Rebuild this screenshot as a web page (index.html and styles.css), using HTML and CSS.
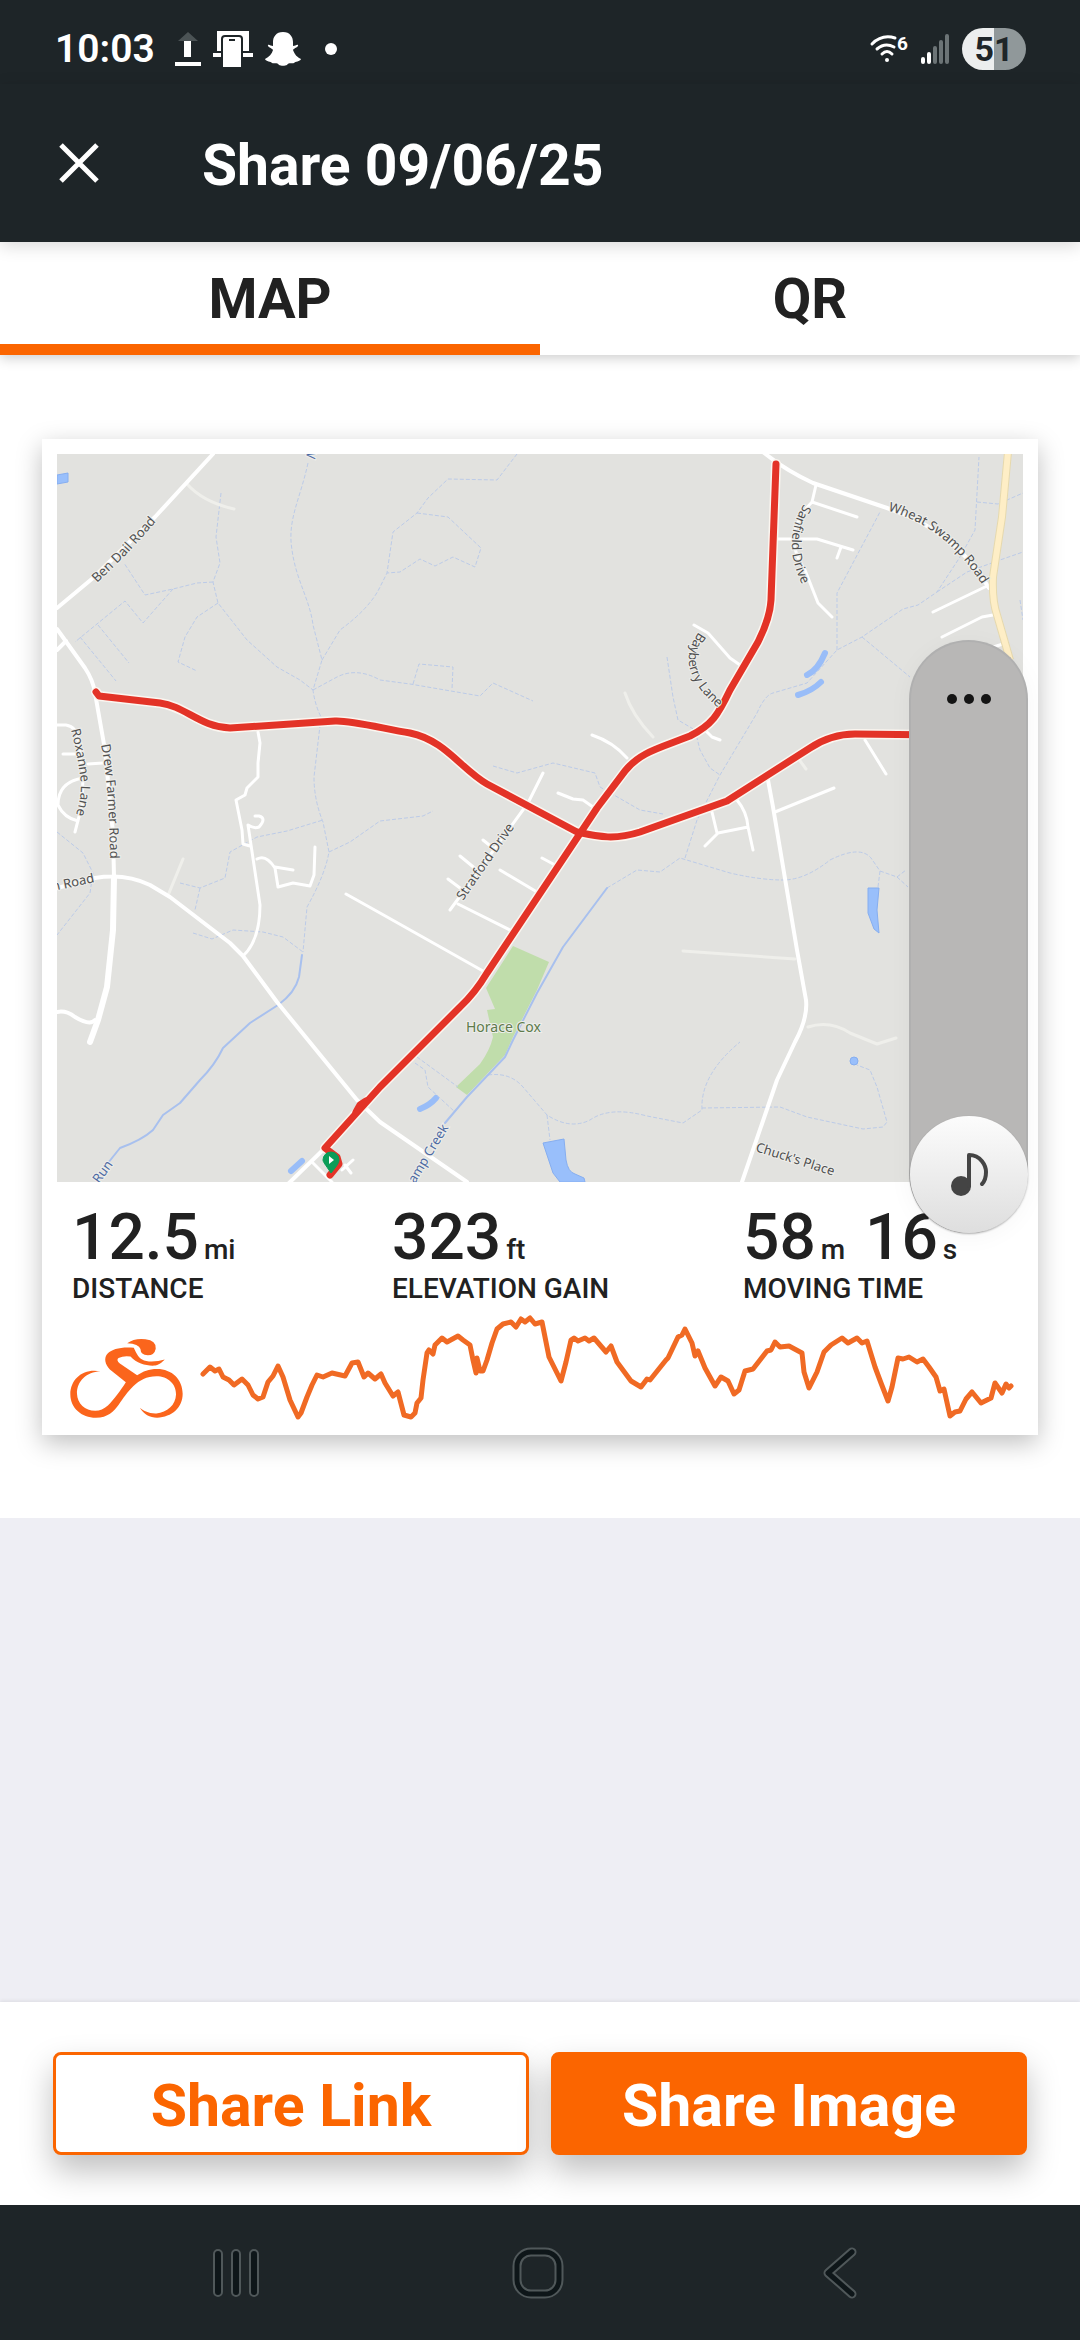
FILE: index.html
```html
<!DOCTYPE html>
<html lang="en">
<head>
  <meta charset="UTF-8" />
  <meta name="viewport" content="width=device-width, initial-scale=1.0"/>
  <title>Share 09/06/25</title>
  <link rel="stylesheet" href="styles.css">
</head>
<body>
  <div class="status-bar">
    <span class="clock">10:03</span>
    <div class="notifications">
      <svg width="26" height="34" viewBox="0 0 26 34">
        <path d="M13 0L23 9H3Z" fill="#4b5355"/>
        <path d="M9 9h7v16H9zM0 30h26v4H0z" fill="#fff"/>
      </svg>
      <svg width="40" height="36" viewBox="0 0 40 36">
        <path d="M4 0h32v20H4zM0 22h40v4H0z" fill="#fff"/>
        <path d="M8 36V8q0-4 4-4h14q4 0 4 4v28z" fill="#1e2528"/>
        <path d="M10 36V8q0-2 2-2h14q2 0 2 2v28z" fill="#fff"/>
        <path d="M16 9h6" stroke="#1e2528" stroke-width="2"/>
      </svg>
      <svg width="36" height="34" viewBox="0 0 36 34">
        <path d="M18 0C25 0 28 5 28 10V14C30 14 32 12 33 13C34 15 29 16 28 18C30 23 32 25 36 27C35 30 30 29 29 31C27 32 24 30 22 33C20 34 16 34 14 33C12 30 9 32 7 31C6 29 1 30 0 27C4 25 7 22 8 18C7 16 2 15 3 13C4 12 6 14 8 14V10C8 5 11 0 18 0Z" fill="#fff"/>
      </svg>
      <span class="dot"></span>
    </div>
    <div class="system-icons">
      <svg class="wifi" width="38" height="28" viewBox="0 0 38 28">
        <g fill="none" stroke="#fff" stroke-width="3" stroke-linecap="round">
          <path d="M2 9Q12 -1 25 3"/>
          <path d="M7 14Q15 7 24 12"/>
          <path d="M12 19Q17 14 22 19"/>
        </g>
        <circle cx="17" cy="25" r="2" fill="#fff"/>
        <text class="wifi-gen" x="27" y="15">6</text>
      </svg>
      <svg width="28" height="30" viewBox="0 0 28 30">
        <g stroke-width="4" stroke-linecap="round">
          <path d="M2 25v3M8 20v8" stroke="#fff"/>
          <path d="M14 14v14M20 8v20M26 2v26" stroke="#6c7476"/>
        </g>
      </svg>
      <span class="battery">51</span>
    </div>
  </div>

  <header class="app-bar">
    <button class="close" aria-label="Close">
      <svg width="40" height="40" viewBox="0 0 40 40"><path d="M2 2L38 38M38 2L2 38" stroke="#fff" stroke-width="5"/></svg>
    </button>
    <h1>Share 09/06/25</h1>
  </header>

  <nav class="tabs">
    <button class="tab active">MAP</button>
    <button class="tab">QR</button>
  </nav>

  <main>
    <section class="preview">
      <article class="card">
        <svg class="map" viewBox="57 454 966 728">
          <rect x="57" y="454" width="966" height="728" fill="#e2e2df"/>

          <!-- park -->
          <path class="park" d="M513 946L549 962L537 990L513 1037L505 1055L467 1095L456 1087L480 1064Q490 1050 493 1037L487 1010L495 1009L486 988Z"/>

          <!-- ponds -->
          <g class="pond">
            <path d="M57 475L68 473V482L57 484Z"/>
            <path d="M868 888H879L877 910L879 933L874 929L868 913Z"/>
            <path d="M543 1143L564 1139L566 1160Q568 1172 575 1174L584 1178L585 1182H560L553 1173Z"/>
            <circle cx="854" cy="1061" r="4"/>
          </g>
          <g class="pond-line">
            <path d="M825 653Q818 670 807 675M821 682Q812 691 798 695"/>
            <path d="M436 1098Q430 1105 420 1109M302 1161L291 1171"/>
          </g>

          <!-- dashed creeks -->
          <g class="creek-dash">
            <path d="M308 463C300 500 287 520 292 550C296 580 310 600 313 625L322 660L313 690Q315 705 321 717L314 777Q314 800 323 822L329 852Q325 875 307 907L303 952"/>
            <path d="M517 454L497 480L448 479L428 498L417 513L393 532L387 573L380 587Q370 608 340 630L322 660"/>
            <path d="M417 513L448 517L481 548L475 567L453 557L435 566L420 559L400 572L387 573"/>
            <path d="M221 493L216 537L220 563L213 582L218 603L247 640L277 667L300 680L313 690"/>
            <path d="M213 582L197 583L173 589L145 595L124 563M173 589L143 623L125 601L75 642M98 625L129 663M80 637L116 681"/>
            <path d="M218 603L197 617L185 637L178 662L197 671"/>
            <path d="M313 690L337 677Q357 667 380 680L410 684L480 696L493 683L533 701M413 684L419 664L453 667L452 689"/>
            <path d="M667 657L673 697L678 720L695 730L700 750L710 768L720 775M685 858L697 820L720 775L757 713Q765 695 773 693L807 683L837 650L862 637L903 609L918 605L937 592L960 557L975 530L979 457"/>
            <path d="M837 650V593L880 512M862 637L910 677M937 592L967 572L1000 560L1023 552M977 502L998 504L1023 493M1020 600L1023 620"/>
            <path d="M493 766L517 773L553 763L595 773L600 787L640 810L663 814"/>
            <path d="M180 883L200 888L225 878L230 852L257 837L287 831L323 820M200 888L195 910M193 933L212 939L233 930L263 932L283 937L303 952"/>
            <path d="M329 852L350 842L380 821L423 816L433 811M57 832L83 853L93 873L90 893L57 935"/>
            <path d="M607 888L637 870L660 872L680 858L730 873Q760 880 783 880Q805 880 830 860Q860 845 871 858L880 871L897 877L908 887M880 871L878 887M897 877L906 870"/>
            <path d="M488 1075Q510 1072 523 1087L547 1115Q570 1130 590 1120Q610 1106 647 1116L683 1123L702 1110Q700 1075 740 1042M702 1108L780 1107L807 1117L863 1129L883 1127L887 1122L877 1087L870 1070L857 1065"/>
            <path d="M547 1115L550 1140M417 1057L458 1087M415 1063L425 1070L428 1087L455 1112"/>
          </g>

          <!-- open creeks -->
          <g class="creek">
            <path d="M302 955L299 977Q295 993 278 1005L250 1023L223 1048Q215 1065 200 1080L180 1103L163 1115L153 1130Q142 1140 120 1148L108 1163"/>
            <path d="M607 888L563 947L537 993L513 1040L505 1057L467 1097L445 1123"/>
          </g>

          <!-- lanes and tracks -->
          <g class="track">
            <path d="M187 484Q203 502 234 509M183 859L169 893M625 693Q632 715 653 737M683 951L795 959"/>
            <path d="M808 1027Q830 1020 850 1033L877 1044L896 1038M798 758L806 769"/>
          </g>

          <!-- roads -->
          <g class="road">
            <path d="M213 454L155 517L93 578L57 608M57 650L66 641"/>
            <path d="M57 629L85 668Q93 680 95 693L105 750L113 833L114 877M57 888L95 878Q125 873 150 885L170 897L230 943L243 956L277 1002L357 1100L380 1122L467 1182"/>
            <path d="M57 1012Q66 1010 75 1017Q90 1026 95 1020"/>
            <path d="M763 452Q785 470 813 483L887 508Q955 530 989 588"/>
            <path d="M768 780L773 807L797 950L806 1000Q808 1018 795 1042L777 1080L742 1182"/>
            <path d="M325 1148L288 1184"/>
          </g>
          <path class="road-wide" d="M114 877L113 930L107 987L98 1020L90 1042"/>
          <g class="lane">
            <path d="M346 894L380 913L483 971M458 904L512 931M500 870L537 892"/>
            <path d="M57 725H66Q77 727 78 740L83 777L82 805L75 832M63 754H75M88 764L103 763M83 778Q58 782 58 805Q64 818 78 821"/>
            <path d="M258 732L260 743L258 763V777L247 788L245 795L236 800L242 830L243 844L250 846M243 956Q260 940 260 905L248 825Q254 829 259 827Q267 818 259 816H255M257 859Q266 854 275 868L278 887L293 883L310 886L314 875L315 847M275 867L293 870"/>
            <path d="M450 910L528 803L543 773M448 879L460 888M460 856L477 870M483 840L493 848M542 858L555 865"/>
            <path d="M558 793L573 799L583 800L593 807M592 735Q613 742 627 758M705 730L712 737L720 740M694 625L708 633L730 658L740 665"/>
            <path d="M816 485L812 502L857 517M812 502Q780 535 805 570L818 603L832 617M778 539H817L853 550M841 547L837 558"/>
            <path d="M933 612L987 586M942 637L982 617L993 615M990 648L1003 644M865 740L886 774M834 788L775 812M737 800Q747 812 748 827L753 850M748 827L718 833L705 846M712 812L717 833"/>
            <path d="M312 1162L332 1182M353 1160L342 1170M345 1165L351 1173"/>
          </g>
          <path d="M1008 452L1002 517L993 577Q992 600 997 615L1010 660" fill="none" stroke="#e6d9ae" stroke-width="8"/>
          <path d="M1008 452L1002 517L993 577Q992 600 997 615L1010 660" fill="none" stroke="#feeec6" stroke-width="6"/>

          <!-- ride -->
          <g class="ride-casing">
            <path d="M96 692L99 696L160 703C185 706 200 727 230 728L335 721C350 720 385 729 410 733C445 740 462 770 487 784L577 832C600 837 615 840 640 832L727 801L810 748C825 738 838 734 855 734L940 735"/>
            <path d="M776 464L771 600Q770 618 758 642L730 690C718 715 712 725 690 736C660 748 640 752 625 771L597 808L487 973Q475 993 460 1007L380 1087L325 1148"/>
          </g>
          <g class="ride">
            <path d="M96 692L99 696L160 703C185 706 200 727 230 728L335 721C350 720 385 729 410 733C445 740 462 770 487 784L577 832C600 837 615 840 640 832L727 801L810 748C825 738 838 734 855 734L940 735"/>
            <path d="M776 464L771 600Q770 618 758 642L730 690C718 715 712 725 690 736C660 748 640 752 625 771L597 808L487 973Q475 993 460 1007L380 1087L325 1148L337 1157L339 1164L330 1175"/>
            <path d="M366 1101L360 1105L356 1112"/>
          </g>
          <path d="M331 1173C325 1164 323 1162 323 1160A8 8 0 1 1 339 1160C339 1163 336 1167 331 1173Z" fill="#0b9d58" stroke="#0b9d58"/>
          <path d="M329 1156L334 1160L329 1164Z" fill="#fff"/>

          <!-- names -->
          <defs>
            <path id="ben" d="M97 583L125 556L162 515"/>
            <path id="roxanne" d="M71 730Q76 748 80 775Q84 795 72 826"/>
            <path id="drew" d="M101 745Q110 790 110 870"/>
            <path id="nroad" d="M53 891L110 879"/>
            <path id="stratford" d="M463 901L518 822"/>
            <path id="bayberry" d="M699 632Q682 655 693 677Q700 693 722 711"/>
            <path id="sanfield" d="M804 504Q776 547 812 602"/>
            <path id="wheat" d="M888 511Q952 527 992 602"/>
            <path id="chuck" d="M755 1151L840 1178"/>
            <path id="creek" d="M415 1184L455 1117"/>
            <path id="run" d="M99 1184L118 1158"/>
          </defs>
          <g class="label">
            <text><textPath href="#ben">Ben Dail Road</textPath></text>
            <text><textPath href="#roxanne">Roxanne Lane</textPath></text>
            <text><textPath href="#drew">Drew Farmer Road</textPath></text>
            <text><textPath href="#nroad">n Road</textPath></text>
            <text><textPath href="#stratford">Stratford Drive</textPath></text>
            <text><textPath href="#bayberry">Bayberry Lane</textPath></text>
            <text><textPath href="#sanfield">Sanfield Drive</textPath></text>
            <text><textPath href="#wheat">Wheat Swamp Road</textPath></text>
            <text><textPath href="#chuck">Chuck's Place</textPath></text>
            <text class="green" x="466" y="1032">Horace Cox</text>
            <text class="blue"><textPath href="#creek">amp Creek</textPath></text>
            <text class="blue"><textPath href="#run">Run</textPath></text>
            <text class="blue" transform="translate(308 446) rotate(100)">W</text>
          </g>
        </svg>

        <div class="stats">
          <div class="stat">
            <p class="value">12.5<small>mi</small></p>
            <p class="name">DISTANCE</p>
          </div>
          <div class="stat">
            <p class="value">323<small>ft</small></p>
            <p class="name">ELEVATION GAIN</p>
          </div>
          <div class="stat">
            <p class="value">58<small>m</small> 16<small>s</small></p>
            <p class="name">MOVING TIME</p>
          </div>
        </div>

        <div class="elevation">
          <svg class="rider" viewBox="118 470 340 242">
            <path d="M290 486Q312 470 345 474Q378 478 376 502Q372 522 352 522Q330 520 330 503Q325 488 290 486Z"/>
            <path d="M210 571C160 560 119 592 119 640C119 680 152 710 196 710C232 710 250 690 265 670C290 635 320 585 378 585C412 585 438 608 437 640C436 672 410 694 378 697C355 698 338 688 328 680C340 700 358 710 380 710C425 708 457 680 457 638C457 595 425 563 380 563C355 563 338 570 320 582L268 547Q256 536 264 530Q280 523 300 526C320 548 350 555 375 553C390 550 398 540 403 535C380 542 350 544 335 535C322 527 315 510 310 499C270 496 245 503 232 516C218 530 224 550 238 565L286 603C270 628 250 655 232 673C220 684 208 689 194 689C163 689 140 668 139 638C138 600 170 570 210 571Z"/>
          </svg>
          <svg class="profile" viewBox="0 0 814 110">
            <polyline points="3,62 10,55 15,59 19,57 23,65 29,68 34,73 42,67 48,73 53,83 58,87 63,85 68,70 73,64 78,54 83,65 90,88 98,105 101,101 107,85 112,73 117,63 123,65 132,61 145,64 152,51 158,50 164,65 168,61 175,67 181,62 185,71 193,84 198,80 204,103 211,105 215,101 217,91 221,86 223,68 227,41 229,38 233,42 235,33 242,26 247,30 258,24 263,28 270,33 273,48 276,61 277,46 280,59 283,59 287,48 292,31 297,17 303,12 311,10 316,15 321,7 325,10 330,6 335,12 342,10 349,45 361,69 366,50 371,28 374,26 378,29 385,26 389,29 394,26 406,40 411,34 417,50 431,69 441,75 447,67 450,68 466,48 468,46 478,25 482,23 485,17 492,31 495,44 498,39 505,56 515,74 521,65 528,69 534,82 539,78 545,59 553,57 560,48 567,39 571,38 575,30 580,35 589,34 602,41 604,60 609,76 612,70 617,60 624,40 631,33 642,26 648,31 657,26 662,31 667,29 675,55 681,71 688,89 692,75 698,46 703,47 709,45 717,50 723,47 729,55 736,65 740,79 744,77 750,104 755,100 760,99 766,87 772,80 781,91 791,86 795,71 802,81 806,72 809,76 811,74"/>
          </svg>
        </div>
      </article>
    </section>
  </main>

  <footer class="actions">
    <button class="btn outline">Share Link</button>
    <button class="btn filled">Share Image</button>
  </footer>

  <div class="nav-bar">
    <button aria-label="Recent apps">
      <svg width="54" height="54" viewBox="0 0 54 54">
        <g fill="#0e1619" stroke="#50585a" stroke-width="2">
          <rect x="5" y="4" width="8" height="46" rx="4"/>
          <rect x="23" y="4" width="8" height="46" rx="4"/>
          <rect x="41" y="4" width="8" height="46" rx="4"/>
        </g>
      </svg>
    </button>
    <button aria-label="Home">
      <svg width="54" height="54" viewBox="0 0 54 54">
        <g fill="none">
          <rect x="6" y="6" width="42" height="42" rx="14" stroke="#50585a" stroke-width="9"/>
          <rect x="6" y="6" width="42" height="42" rx="14" stroke="#0e1619" stroke-width="5"/>
        </g>
      </svg>
    </button>
    <button aria-label="Back">
      <svg width="54" height="54" viewBox="0 0 54 54">
        <g fill="none" stroke-linecap="round" stroke-linejoin="round">
          <path d="M39 6L15 27L39 48" stroke="#50585a" stroke-width="9"/>
          <path d="M39 6L15 27L39 48" stroke="#0e1619" stroke-width="5"/>
        </g>
      </svg>
    </button>
  </div>

  <!-- floating media handle -->
  <div class="floating">
    <button class="more" aria-label="More"><i></i><i></i><i></i></button>
    <button class="music" aria-label="Music">
      <svg width="40" height="46" viewBox="0 0 40 46">
        <circle cx="12" cy="34" r="10" fill="#444"/>
        <path d="M20 34V3C32 3 37 14 37 20Q37 28 33 32" fill="none" stroke="#444" stroke-width="4" stroke-linecap="round" stroke-linejoin="round"/>
      </svg>
    </button>
  </div>
</body>
</html>
```
FILE: styles.css
```css
:root {
  --dark: #1e2528;
  --orange: #fb6500;
  --text: #212121;
  --white: #ffffff;
  --page: #eeeef4;
}

* {
  box-sizing: border-box;
  margin: 0;
  padding: 0;
}

body {
  display: flex;
  flex-direction: column;
  min-height: 100vh;
  font-family: Roboto, sans-serif;
  background-color: var(--page);
  color: var(--text);
}

button {
  font-family: inherit;
  border: none;
  background: none;
  cursor: pointer;
}

svg {
  display: block;
}

/* Status bar */
.status-bar {
  display: flex;
  align-items: center;
  height: 84px;
  padding: 14px 54px 0 55px;
  background-color: var(--dark);
  color: var(--white);
}

.clock {
  font-size: 39px;
  font-weight: 600;
}

.notifications {
  display: flex;
  align-items: center;
  gap: 12px;
  margin-left: 20px;
}

.dot {
  width: 12px;
  height: 12px;
  margin-left: 12px;
  border-radius: 50%;
  background-color: var(--white);
}

.system-icons {
  display: flex;
  align-items: center;
  gap: 13px;
  margin-left: auto;
}

.wifi {
  overflow: visible;
}

.wifi-gen {
  font-size: 19px;
  font-weight: 700;
  fill: var(--white);
}

.battery {
  width: 64px;
  border-radius: 21px;
  background: linear-gradient(90deg, #eceeee 50%, #90989a 50%);
  color: var(--dark);
  font-size: 34px;
  font-weight: 700;
  line-height: 42px;
  text-align: center;
}

/* App bar */
.app-bar {
  position: relative;
  z-index: 2;
  display: flex;
  align-items: center;
  gap: 103px;
  height: 158px;
  padding: 0 59px;
  background-color: var(--dark);
  color: var(--white);
  box-shadow: 0 4px 16px rgba(0, 0, 0, 0.15);
}

.app-bar h1 {
  padding-top: 4px;
  font-size: 57px;
  font-weight: 700;
}

/* Tabs */
.tabs {
  position: relative;
  z-index: 1;
  display: flex;
  background-color: var(--white);
  box-shadow: 0 3px 12px rgba(0, 0, 0, 0.2);
}

.tab {
  flex: 1;
  height: 113px;
  padding-top: 12px;
  border-bottom: 11px solid transparent;
  color: var(--text);
  font-size: 56px;
  font-weight: 700;
}

.tab.active {
  border-bottom-color: var(--orange);
}

/* Share card */
main {
  flex: 1;
}

.preview {
  padding: 84px 42px 83px;
  background-color: var(--white);
}

.card {
  padding: 15px 15px 13px;
  background-color: var(--white);
  box-shadow: 0 8px 24px rgba(0, 0, 0, 0.25);
}

.map {
  width: 100%;
}

.park {
  fill: #c0ddab;
}

.pond {
  fill: #99bffb;
  stroke: #86aef0;
}

.pond-line,
.creek,
.creek-dash,
.track,
.road,
.road-wide,
.lane,
.ride-casing,
.ride {
  fill: none;
  stroke-linecap: round;
  stroke-linejoin: round;
}

.pond-line {
  stroke: #99bdf8;
  stroke-width: 6;
}

.creek {
  stroke: #a8c0ee;
  stroke-width: 2;
}

.creek-dash {
  stroke: #bccbe8;
  stroke-width: 1;
  stroke-linecap: butt;
  stroke-dasharray: 4 2;
}

.track {
  stroke: #efefeb;
  stroke-width: 3;
}

.road {
  stroke: #ffffff;
  stroke-width: 4;
}

.road-wide {
  stroke: #ffffff;
  stroke-width: 6;
}

.lane {
  stroke: #ffffff;
  stroke-width: 3;
}

.ride-casing {
  stroke: #fbf6f0;
  stroke-width: 10;
}

.ride {
  stroke: #e33327;
  stroke-width: 7;
}

.label {
  font-family: "Noto Sans", sans-serif;
  font-size: 13px;
  fill: #505050;
  stroke: #eeeeeb;
  stroke-width: 2px;
  paint-order: stroke;
}

.label .green {
  font-size: 14px;
  fill: #5d7a4c;
}

.label .blue {
  fill: #4d6aa3;
}

/* Stats */
.stats {
  display: grid;
  grid-template-columns: 320fr 351fr 280fr;
  padding: 21px 0 7px 15px;
}

.value {
  font-size: 64px;
  font-weight: 500;
  line-height: 70px;
  white-space: nowrap;
}

.value small {
  margin: 0 4px 0 5px;
  font-size: 28px;
  line-height: 28px;
}

.name {
  font-size: 28px;
  font-weight: 500;
  line-height: 32px;
}

.elevation {
  display: flex;
  align-items: flex-end;
  gap: 17px;
  padding: 0 9px 0 13px;
}

.rider {
  width: 113px;
  margin-bottom: 4px;
  fill: #fb651c;
}

.profile {
  flex: 1;
  min-width: 0;
}

.profile polyline {
  fill: none;
  stroke: #f06a24;
  stroke-width: 5;
  stroke-linecap: round;
  stroke-linejoin: round;
}

/* Bottom buttons */
.actions {
  display: flex;
  gap: 22px;
  padding: 50px 53px;
  background-color: var(--white);
  box-shadow: 0 -1px 4px rgba(0, 0, 0, 0.08);
}

.btn {
  flex: 1;
  height: 103px;
  padding-top: 4px;
  border: 3px solid var(--orange);
  border-radius: 8px;
  font-size: 59px;
  font-weight: 700;
  box-shadow: 0 16px 32px rgba(0, 0, 0, 0.25);
}

.btn.outline {
  background-color: var(--white);
  color: var(--orange);
}

.btn.filled {
  background-color: var(--orange);
  color: var(--white);
}

/* System navigation */
.nav-bar {
  position: relative;
  display: flex;
  align-items: center;
  justify-content: center;
  gap: 248px;
  height: 135px;
  padding-right: 5px;
  background-color: var(--dark);
}

/* Floating handle over the page */
.floating {
  position: absolute;
  top: 640px;
  right: 52px;
  display: flex;
  flex-direction: column;
  justify-content: space-between;
  align-items: center;
  width: 119px;
  height: 593px;
  border: 2px solid #b0b0b0;
  border-bottom: none;
  border-radius: 60px;
  background-color: #b8b7b6;
  box-shadow: 0 4px 24px rgba(0, 0, 0, 0.04);
}

.more {
  display: flex;
  gap: 7px;
  padding: 52px 20px;
}

.more i {
  width: 10px;
  height: 10px;
  border-radius: 50%;
  background-color: #141414;
}

.music {
  display: flex;
  align-items: center;
  justify-content: center;
  width: 118px;
  height: 117px;
  border-radius: 50%;
  background: linear-gradient(#fcfcfc, #dedede);
  box-shadow: 0 1px 2px rgba(0, 0, 0, 0.3);
}
```
